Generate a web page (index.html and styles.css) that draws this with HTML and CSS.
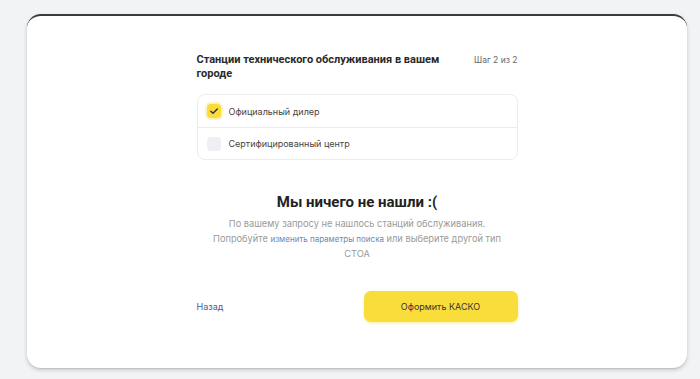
FILE: index.html
```html
<!DOCTYPE html>
<html lang="ru">
<head>
<meta charset="utf-8">
<link rel="stylesheet" href="styles.css">
</head>
<body>
<div class="page">
  <div class="card">
    <div class="content">
      <div class="head">
        <h1 class="title">Станции технического обслуживания в вашем городе</h1>
        <span class="step">Шаг 2 из 2</span>
      </div>
      <div class="options">
        <label class="option">
          <span class="check check-on">
            <svg viewBox="0 0 14 14" width="14" height="14"><path d="M3.8 7.2 L6 9.3 L10.3 4.9" fill="none" stroke="#333" stroke-width="1.4" stroke-linecap="round" stroke-linejoin="round"/></svg>
          </span>
          <span class="opt-label">Официальный дилер</span>
        </label>
        <label class="option">
          <span class="check"></span>
          <span class="opt-label">Сертифицированный центр</span>
        </label>
      </div>
      <div class="empty">
        <h2 class="empty-title">Мы ничего не нашли :(</h2>
        <p class="empty-text"><span>По вашему запросу не нашлось станций обслуживания.</span> <span>Попробуйте</span> <a class="link" href="#">изменить параметры поиска</a> <span>или выберите другой тип</span> <span>СТОА</span></p>
      </div>
      <div class="footer">
        <a class="back" href="#">Назад</a>
        <button class="primary">Оформить КАСКО</button>
      </div>
    </div>
  </div>
</div>
</body>
</html>
```
FILE: styles.css
```css
* { box-sizing: border-box; }
html, body { margin: 0; padding: 0; }
body {
  background: #f2f3f5;
  font-family: Inter, "Noto Sans", sans-serif;
  color: #333;
}
.page {
  padding: 14px 13px 11px 27px;
  height: 379px;
}
.card {
  height: 354px;
  background: #fff;
  border-radius: 14px;
  border-top: 2px solid #3a3c40;
  box-shadow: 0 2px 4px rgba(0,0,0,0.18), 0 1px 1px rgba(0,0,0,0.08);
  display: flex;
  justify-content: center;
}
.content {
  width: 321px;
  padding-top: 37px;
  display: flex;
  flex-direction: column;
}
.head {
  display: flex;
  justify-content: space-between;
  align-items: flex-start;
}
.title {
  margin: 0;
  width: 262px;
  font-family: Roboto, "Noto Sans", sans-serif;
  font-size: 11px;
  line-height: 14px;
  font-weight: 700;
  color: #2a2a2a;
}
.step {
  font-size: 8.5px;
  line-height: 14px;
  color: #666;
}
.options {
  margin-top: 13px;
  border: 1px solid #ececef;
  border-radius: 8px;
}
.option {
  display: flex;
  align-items: center;
  height: 32px;
  padding-left: 9px;
}
.option + .option { border-top: 1px solid #ececef; }
.check {
  width: 14px;
  height: 14px;
  border-radius: 4px;
  background: #eeeff2;
  display: flex;
}
.check-on {
  background: #f9dc3c;
  box-shadow: 0 0 0 2px rgba(249, 220, 60, 0.35);
}
.opt-label {
  margin-left: 8px;
  font-size: 9px;
  color: #444;
}
.empty {
  margin-top: 32px;
  text-align: center;
}
.empty-title {
  margin: 0;
  font-family: Roboto, "Noto Sans", sans-serif;
  font-size: 15px;
  line-height: 20px;
  font-weight: 700;
  color: #222;
}
.empty-text {
  margin: 4px auto 0;
  width: 294px;
  font-size: 9.25px;
  line-height: 15px;
  color: #9a9a9a;
}
.link {
  font-size: 8px;
  line-height: 10px;
  color: #6d87b5;
  text-decoration: none;
}
.footer {
  margin-top: 30px;
  display: flex;
  justify-content: space-between;
  align-items: center;
}
.back {
  font-size: 9px;
  color: #4b5a9a;
  text-decoration: none;
}
.primary {
  width: 154px;
  height: 31px;
  border: 0;
  border-radius: 7px;
  background: #f9dd3b;
  box-shadow: 0 1px 3px rgba(249, 221, 59, 0.5);
  font-family: inherit;
  font-size: 9px;
  color: #333;
}
```
